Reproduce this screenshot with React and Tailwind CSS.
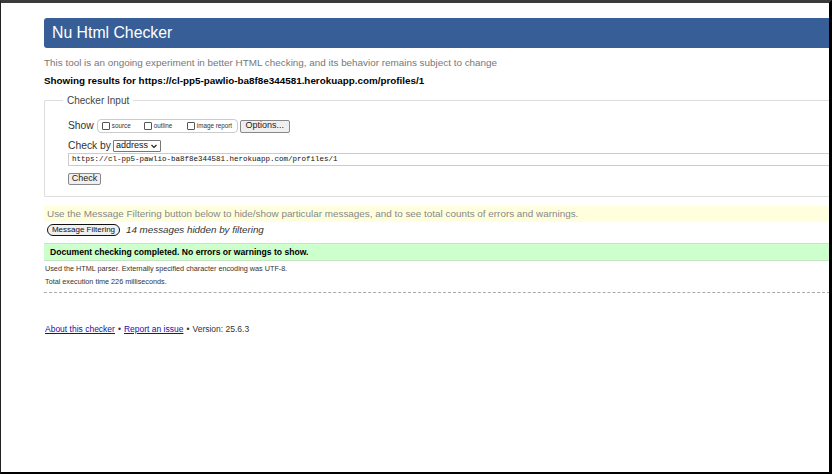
import React from "react";

function Box() {
  return <span className="inline-block w-[8px] h-[8px] border border-[#555] rounded-[1px] bg-white mr-[2px]" />;
}

export default function App() {
  return (
    <div className="w-[832px] h-[474px] overflow-hidden bg-white border-t-[3px] border-t-[#3b3b3b] border-l border-l-[#222] border-r-[3px] border-r-black border-b-2 border-b-black" style={{ fontFamily: '"Liberation Sans", Arial, sans-serif' }}>
      <div className="pl-[43px] pt-[15px] w-[1100px] text-[#222]">
        <div className="h-[30px] bg-[#375e96] rounded-[3px] flex items-center pl-[8px]">
          <span className="text-white text-[15.8px] leading-none">Nu Html Checker</span>
        </div>
        <div className="mt-[9px] h-[13px] flex items-center text-[9.9px] text-[#777]">This tool is an ongoing experiment in better HTML checking, and its behavior remains subject to change</div>
        <div className="mt-[5px] h-[13px] flex items-center text-[9.85px] font-bold text-black">Showing results for https://cl-pp5-pawlio-ba8f8e344581.herokuapp.com/profiles/1</div>
        <fieldset className="mt-[6px] border border-[#ddd] rounded-[2px] h-[103px] w-[786px] border-r-0">
          <legend className="ml-[18px] px-[4px] text-[10px] text-[#444] leading-[13px]">Checker Input</legend>
          <div className="pl-[23px]">
            <div className="mt-[12px] h-[14px] flex items-center">
              <span className="text-[10.3px] text-[#333] mr-[3px]">Show</span>
              <span className="h-[14px] w-[141px] border border-[#ccc] rounded-[4px] flex items-center pl-[4px] text-[6.3px] text-[#333]">
                <Box /><span className="w-[32px]">source</span>
                <Box /><span className="w-[33px]">outline</span>
                <Box /><span>image report</span>
              </span>
              <span className="ml-[2px] h-[13px] w-[50px] border border-[#888] rounded-[2px] bg-[#efefef] flex items-center justify-center text-[9px] text-[#222]">Options...</span>
            </div>
            <div className="mt-[6px] h-[13px] flex items-center">
              <span className="text-[10.3px] text-[#333] mr-[2px]">Check by</span>
              <span className="h-[12px] w-[48px] border border-[#777] rounded-[1px] flex items-center pl-[2px] text-[9px] text-[#111] relative">
                address
                <svg className="absolute right-[3px] top-[3px]" width="6" height="5" viewBox="0 0 6 5"><path d="M0.5 1 L3 3.5 L5.5 1" stroke="#222" strokeWidth="1.2" fill="none" /></svg>
              </span>
            </div>
            <div className="mt-[1px] h-[13px] w-[770px] border border-[#ccc] flex items-center pl-[3px] text-[7.5px] text-[#111]" style={{ fontFamily: '"Liberation Mono", "DejaVu Sans Mono", monospace' }}>https://cl-pp5-pawlio-ba8f8e344581.herokuapp.com/profiles/1</div>
            <div className="mt-[7px] h-[12px] w-[33px] border border-[#888] rounded-[2px] bg-[#efefef] flex items-center justify-center text-[9px] text-[#222]">Check</div>
          </div>
        </fieldset>
        <div className="mt-[9px] h-[16px] bg-[#ffffdd] flex items-center pl-[3px] text-[9.9px] text-[#888]">Use the Message Filtering button below to hide/show particular messages, and to see total counts of errors and warnings.</div>
        <div className="mt-[2px] h-[12px] flex items-center">
          <span className="ml-[3px] h-[12px] w-[73px] border-[1.5px] border-[#111] rounded-[6px] bg-[#f0f0f0] flex items-center justify-center text-[8px] text-[#111]">Message Filtering</span>
          <span className="ml-[6px] text-[9.8px] italic text-[#333]">14 messages hidden by filtering</span>
        </div>
        <div className="mt-[7px] h-[18px] bg-[#ccffcc] border-y border-[#c4e6c4] flex items-center pl-[6px] text-[8.6px] font-bold text-black">Document checking completed. No errors or warnings to show.</div>
        <div className="mt-[3px] h-[11px] flex items-center pl-[1px] text-[7.25px] text-[#333]">Used the HTML parser. Externally specified character encoding was UTF-8.</div>
        <div className="mt-[2px] h-[11px] flex items-center pl-[1px] text-[7.25px] text-[#333]">Total execution time 226 milliseconds.</div>
        <div className="mt-[4px] border-t border-dashed border-[#aaa] w-[786px]" />
        <div className="mt-[30px] h-[12px] flex items-center text-[8.5px] text-[#333] pl-[1px]">
          <a className="text-[#1a0dab] underline">About this checker</a>
          <span className="mx-[3px]">•</span>
          <a className="text-[#1a0dab] underline">Report an issue</a>
          <span className="mx-[3px]">•</span>
          <span>Version: 25.6.3</span>
        </div>
      </div>
    </div>
  );
}
